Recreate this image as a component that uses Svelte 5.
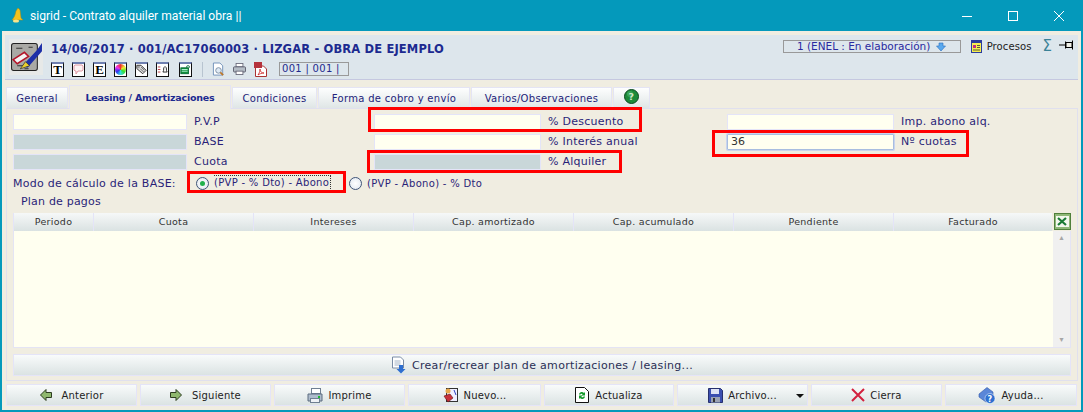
<script>
  const tools = ['T', 'E'];
  const tabs = [
    { label: 'General', w: 62 },
    { label: 'Leasing / Amortizaciones', w: 162, active: true },
    { label: 'Condiciones', w: 85 },
    { label: 'Forma de cobro y envío', w: 152 },
    { label: 'Varios/Observaciones', w: 141 }
  ];
  const cols = [
    { label: 'Periodo', w: 80 },
    { label: 'Cuota', w: 160 },
    { label: 'Intereses', w: 160 },
    { label: 'Cap. amortizado', w: 160 },
    { label: 'Cap. acumulado', w: 160 },
    { label: 'Pendiente', w: 160 },
    { label: 'Facturado', w: 159 }
  ];
</script>

<div class="win">
  <div class="titlebar">
    <svg class="bell" width="12" height="15" viewBox="0 0 12 15">
      <path d="M7 0 L9 2 L10 10 L12 12 L1 12 Q4 9 5 3 Z" fill="#f2c21d" stroke="#a98a14" stroke-width=".5" />
      <ellipse cx="5" cy="13" rx="3" ry="1.500" fill="#f7e48a" />
    </svg>
    <span class="wintitle">sigrid - Contrato alquiler material obra ||</span>
    <div class="winbtns">
      <svg width="12" height="12" viewBox="0 0 12 12"><path d="M1 6.500h10" stroke="#fff" /></svg>
      <svg width="12" height="12" viewBox="0 0 12 12"><rect x="1.500" y="1.500" width="9" height="9" fill="none" stroke="#fff" /></svg>
      <svg width="12" height="12" viewBox="0 0 12 12"><path d="M1 1l10 10M11 1L1 11" stroke="#fff" /></svg>
    </div>
  </div>

  <div class="body">
    <header class="head">
      <div class="logo">
        <svg width="33" height="33" viewBox="0 0 32 32">
          <rect x="1.500" y="2.500" width="25" height="26" rx="2" fill="#a9a9a5" stroke="#222" />
          <path d="M6 7h6M18 6h4M7 24h10M14 27h4" stroke="#333" />
          <path d="M3 18 L14 11 L18 15 L7 22 Z" fill="#f4f4f4" stroke="#b3162a" stroke-width="1.500" />
          <path d="M12 24 L26 9 L31 2 L31 10 L17 26 Z" fill="#1c2fa8" />
          <path d="M10 27 L15 20 L19 24 Z" fill="#e9cf2f" stroke="#222" stroke-width=".6" />
        </svg>
      </div>
      <div class="headmain">
        <div class="doc">14/06/2017 · 001/AC17060003 · LIZGAR - OBRA DE EJEMPLO</div>
        <div class="toolrow">
          <span class="tool"><b>{tools[0]}</b></span>
          <span class="tool">
            <svg width="11" height="11" viewBox="0 0 11 11"><path d="M2 1h7l1 1v4l-1 1H5l-2 3V7H2L1 6V2z" fill="#fdf3f3" stroke="#e09aa5" /></svg>
          </span>
          <span class="tool"><b>{tools[1]}</b></span>
          <span class="tool"><span class="wheel"></span></span>
          <span class="tool">
            <svg width="11" height="11" viewBox="0 0 13 12"><path d="M1 1h5l6 6-4 4-7-6z" fill="#ddd" stroke="#222" /><path d="M5 5l4 4M6 3l4 4" stroke="#222" stroke-width=".7" /><circle cx="3.200" cy="3" r=".9" fill="#fff" stroke="#222" stroke-width=".5" /></svg>
          </span>
          <span class="tool">
            <svg width="11" height="11" viewBox="0 0 13 12"><path d="M1 3h3M1 6h3M1 9h3" stroke="#b3262e" /><path d="M7 9 Q8 8 8 4 Q9.500 1 11 4 Q11 8 12 9 Z" fill="#fff" stroke="#111" /></svg>
          </span>
          <span class="tool g">
            <svg width="11" height="11" viewBox="0 0 13 12"><rect x="1" y="4" width="9" height="7" fill="#12903a" stroke="#063" /><path d="M2 6h7M2 8h7" stroke="#cfe" /><path d="M8 4V2a2 1.500 0 0 1 3 0v2" fill="none" stroke="#063" /></svg>
          </span>
          <span class="sep"></span>
          <svg width="13" height="15" viewBox="0 0 14 16"><path d="M1.500 1h7l3 3v10h-10z" fill="#fff" stroke="#6e8fb8" /><circle cx="7" cy="9" r="3" fill="#dfeaf5" stroke="#7b8ea3" /><path d="M9 11l3 3" stroke="#b9772c" stroke-width="2" /></svg>
          <svg class="ico2" width="13" height="12" viewBox="0 0 15 14"><rect x="3.500" y=".5" width="8" height="4" fill="#fff" stroke="#667" /><rect x=".5" y="4.500" width="14" height="6" rx="1" fill="#b5bdc6" stroke="#556" /><rect x="3.500" y="9.500" width="8" height="4" fill="#fff" stroke="#667" /></svg>
          <svg width="14" height="15" viewBox="0 0 14 15"><path d="M1.500 4h8l3 3v7.500h-11z" fill="#fff" stroke="#a33" /><rect x="0" y="0" width="8" height="6" fill="#b5323c" /><path d="M4 13c2-3 2-5 2-6 0 3 2 4 4 4-2 0-5 1-6 2z" fill="none" stroke="#c22" stroke-width=".8" /></svg>
          <span class="counter">001 | 001 |</span>
        </div>
      </div>
      <div class="headright">
        <span class="state">1 (ENEL : En elaboración)
          <svg width="10" height="10" viewBox="0 0 10 10"><path d="M3 1h4v3h2.500L5 9 .5 4H3z" fill="#5aa9ee" stroke="#2a6fc0" stroke-width=".6" /></svg>
        </span>
        <svg class="proc" width="11" height="13" viewBox="0 0 11 13"><rect x=".5" y=".5" width="10" height="12" fill="#f6ee52" stroke="#2b3d9c" /><rect x="1" y="1" width="9" height="2" fill="#2b3d9c" /><rect x="2" y="5" width="3" height="3" fill="#c22f80" /><path d="M6 5.500h3M6 7.500h3M2 10h7" stroke="#333" stroke-width=".8" /></svg>
        <span class="proclabel">Procesos</span>
        <span class="sigma">Σ</span>
        <svg class="pin" width="16" height="10" viewBox="0 0 16 10"><path d="M0 5h6" stroke="#000" /><path d="M6.500 1.500v7M13.500 .5v9M7 2.500h6v5H7z" stroke="#000" fill="#f0f0e8" /></svg>
      </div>
    </header>

    <nav class="tabs">
      {#each tabs as t}
        <div class="tab" class:active={t.active} style="width: {t.w}px">{t.label}</div>
      {/each}
      <div class="tab help">
        <svg width="15" height="15" viewBox="0 0 15 15"><circle cx="7.500" cy="7.500" r="7" fill="#1d8a3a" stroke="#0c4a1f" /><circle cx="6" cy="5" r="3" fill="#4eb669" opacity=".6" /><text x="7.500" y="11" text-anchor="middle" font-size="9.500" font-weight="700" fill="#cfe8c8" font-family="DejaVu Sans, sans-serif">?</text></svg>
      </div>
    </nav>

    <section class="panel">
      <div class="fields">
        <div class="in"></div><label>P.V.P</label>
        <div class="in"></div><label>% Descuento</label>
        <div class="in"></div><label>Imp. abono alq.</label>

        <div class="in ro"></div><label>BASE</label>
        <div class="in"></div><label>% Interés anual</label>
        <div class="in focus">36</div><label>Nº cuotas</label>

        <div class="in ro"></div><label>Cuota</label>
        <div class="in ro"></div><label>% Alquiler</label>
        <div></div><div></div>
      </div>

      <div class="mode">
        <span class="modelabel">Modo de cálculo de la BASE:</span>
        <span class="radio on"></span>
        <span class="opt dotted">(PVP - % Dto) - Abono</span>
        <span class="radio"></span>
        <span class="opt">(PVP - Abono) - % Dto</span>
      </div>

      <div class="plan">Plan de pagos</div>

      <div class="grid-head">
        {#each cols as c}
          <div class="th" style="width: {c.w}px">{c.label}</div>
        {/each}
        <svg class="xls" width="17" height="17" viewBox="0 0 17 17"><rect x=".5" y=".5" width="16" height="16" fill="#8fb878" stroke="#4f7f3a" /><rect x="2" y="3" width="13" height="11" fill="#f4f8ee" /><path d="M4 5l8 7M12 5l-8 7" stroke="#1a7a35" stroke-width="2.200" /></svg>
      </div>

      <div class="grid-body">
        <div class="rows"></div>
        <div class="scroll"><span>▴</span><span>▾</span></div>
      </div>

      <button class="wide">
        <svg width="16" height="18" viewBox="0 0 16 18"><path d="M1.500 1h8l3 3v8h-11z" fill="#fff" stroke="#7a8ca6" /><path d="M3.500 5h6M3.500 7h6M3.500 9h6" stroke="#a5b4c6" /><path d="M8 9h4v4h2.500l-4.500 4.500L5.500 13H8z" fill="#2f6fd0" /></svg>
        Crear/recrear plan de amortizaciones / leasing...
      </button>
    </section>

    <footer class="foot">
      <button>
        <svg width="12" height="12" viewBox="0 0 12 12"><path d="M.5 6L6 .5V3.500h5.500v5H6v3z" fill="#8fb86e" stroke="#2d3d20" /></svg>
        <span class="gap">Anterior</span>
      </button>
      <button>
        <svg width="12" height="12" viewBox="0 0 12 12"><path d="M11.500 6L6 .5V3.500H.5v5H6v3z" fill="#8fb86e" stroke="#2d3d20" /></svg>
        <span class="gap">Siguiente</span>
      </button>
      <button>
        <svg width="16" height="15" viewBox="0 0 16 15"><rect x="4.500" y=".5" width="9" height="5" fill="#fff" stroke="#6f7f92" /><path d="M1 6h14v7H1z" fill="#aebccc" stroke="#5d6d80" /><rect x="3.500" y="10.500" width="9" height="4" fill="#eef2f6" stroke="#6f7f92" /><rect x="11" y="8" width="2" height="2" fill="#1fbb2f" /></svg>
        Imprime
      </button>
      <button>
        <svg width="15" height="16" viewBox="0 0 15 16"><rect x="3.500" y="1.500" width="11" height="13" fill="#eef" stroke="#333" /><path d="M1 9l6-2 3 4-5 4z" fill="#c8303a" stroke="#611" stroke-width=".6" /><circle cx="5" cy="4" r="2.500" fill="#e8a84a" /><path d="M11 3l2 5" stroke="#2a3fc0" /></svg>
        <span class="gap-s">Nuevo...</span>
      </button>
      <button>
        <svg width="14" height="16" viewBox="0 0 14 16"><path d="M.5.5h9l4 4v11H.5z" fill="#fff" stroke="#111" /><path d="M4 7a3 3 0 0 1 5-1l1-1v3.500H6.500l1.200-1.200A1.800 1.800 0 0 0 5 8zM10 10a3 3 0 0 1-5 1l-1 1V8.500h3.500l-1.200 1.200a1.800 1.800 0 0 0 2.700-.7z" fill="#169a2c" /></svg>
        <span class="gap-s">Actualiza</span>
      </button>
      <button class="menu">
        <svg width="15" height="15" viewBox="0 0 15 15"><path d="M.5.5h12l2 2v12H.5z" fill="#3b4fb0" stroke="#27306e" /><rect x="3" y="1" width="8" height="5" fill="#dfe4f5" /><rect x="3" y="9" width="9" height="5.500" fill="#9aa3b5" /><rect x="5" y="10" width="2" height="4" fill="#333" /></svg>
        Archivo...
        <span class="caret"></span>
      </button>
      <button>
        <svg width="14" height="14" viewBox="0 0 14 14"><path d="M1 1l12 12M13 1L1 13" stroke="#d3213f" stroke-width="2" /></svg>
        Cierra
      </button>
      <button>
        <svg width="18" height="17" viewBox="0 0 18 17"><path d="M1 7L9 .5l6 4.500v5l-7 5-7-5z" fill="#5a86d8" stroke="#3357a8" stroke-width=".6" /><circle cx="12" cy="11.500" r="5" fill="#2e6fd0" stroke="#fff" stroke-width=".5" /><text x="12" y="14.500" text-anchor="middle" font-size="8" font-weight="700" fill="#fff" font-family="DejaVu Sans, sans-serif">?</text></svg>
        Ayuda...
      </button>
    </footer>
  </div>

  <!-- red annotation boxes drawn over the screenshot -->
  <div class="mark" style="left: 368px; top: 107px; width: 268px; height: 19px"></div>
  <div class="mark" style="left: 367px; top: 150px; width: 249px; height: 17px"></div>
  <div class="mark" style="left: 712px; top: 130px; width: 251px; height: 21px"></div>
  <div class="mark" style="left: 187px; top: 171px; width: 153px; height: 16px"></div>
</div>

<style>
  :global(body) {
    margin: 0;
    background: #0499bb;
  }

  .win {
    position: relative;
    width: 1083px;
    height: 412px;
    overflow: hidden;
    box-sizing: border-box;
    background: #0499bb;
    font-family: "DejaVu Sans", Verdana, sans-serif;
    font-size: 11px;
    color: #2a1f78;
  }

  .titlebar {
    height: 31px;
    display: flex;
    align-items: center;
    color: #fff;
    padding-left: 11px;
  }

  .bell {
    margin-right: 7px;
  }

  .wintitle {
    font-family: Roboto, "Open Sans", sans-serif;
    font-size: 12.100px;
  }

  .winbtns {
    margin-left: auto;
    display: flex;
    gap: 34px;
    margin-right: 18px;
  }

  .body {
    margin: 0 2px;
    height: 379px;
    background: #f0ede1;
    padding: 4px 3px 0 3px;
    box-sizing: border-box;
  }

  .head {
    height: 45px;
    display: flex;
    background: #dde6ec;
    border-bottom: 1px solid #c5c8e0;
    box-sizing: border-box;
  }

  .logo {
    width: 34px;
    height: 36px;
    margin: 4px 0 0 4px;
    background: #e7e9e8;
    display: flex;
    align-items: center;
    justify-content: center;
  }

  .headmain {
    margin-left: 8px;
    padding-top: 7px;
  }

  .doc {
    font-weight: 700;
    font-size: 11.500px;
    color: #1c2a90;
    letter-spacing: .15px;
    line-height: 14px;
  }

  .toolrow {
    display: flex;
    align-items: center;
    margin-top: 5px;
    height: 16px;
  }

  .tool {
    width: 11px;
    height: 12px;
    border: 1px solid #111;
    border-top: 2px solid #6e7fb0;
    background: #fff;
    margin-right: 8px;
    display: flex;
    align-items: center;
    justify-content: center;
    font-family: "Liberation Serif", serif;
    font-size: 13px;
    color: #000;
    line-height: 1;
    overflow: hidden;
  }

  .wheel {
    width: 11px;
    height: 11px;
    border-radius: 50%;
    background: conic-gradient(#e33, #ee3, #3d3, #3dd, #33e, #e3e, #e33);
  }

  .tool.g {
    margin-left: 2px;
  }

  .sep {
    width: 1px;
    height: 15px;
    background: #b8c4d0;
    margin: 0 9px 0 2px;
  }

  .ico2 {
    margin: 0 8px 0 8px;
  }

  .counter {
    margin-left: 11px;
    border: 1px solid #999;
    height: 12px;
    width: 66px;
    line-height: 12px;
    font-size: 10px;
    color: #232a8c;
    padding-left: 2px;
    letter-spacing: .3px;
    box-sizing: content-box;
  }

  .headright {
    margin-left: auto;
    display: flex;
    align-items: flex-start;
    padding-top: 5px;
    padding-right: 3px;
  }

  .state {
    width: 176px;
    height: 11px;
    border: 1px solid #999;
    line-height: 11px;
    font-size: 10.500px;
    display: flex;
    align-items: center;
    justify-content: center;
    gap: 6px;
    color: #2a2aa0;
    white-space: nowrap;
  }

  .proc {
    margin: 0 5px 0 10px;
  }

  .proclabel {
    color: #222;
    font-size: 10px;
    margin-top: 1px;
    letter-spacing: .1px;
  }

  .sigma {
    margin-left: 11px;
    color: #3a8297;
    font-size: 15px;
    line-height: 12px;
  }

  .pin {
    margin: 0 0 0 7px;
  }

  .tabs {
    display: flex;
    margin: 6px 0 0 0;
    height: 22px;
    gap: 1px;
    align-items: flex-end;
  }

  .tab {
    height: 21px;
    box-sizing: border-box;
    border: 1px solid #e4e4f4;
    border-bottom: 0;
    background: linear-gradient(#fdfefe, #dfe6e6);
    text-align: center;
    font-size: 10px;
    line-height: 21px;
    color: #23237a;
    letter-spacing: .3px;
  }

  .tab:first-child {
    margin-left: 1px;
  }

  .tab.active {
    height: 24px;
    background: #f0ede1;
    font-weight: 700;
    font-size: 9.500px;
    line-height: 23px;
    color: #1c2a90;
    position: relative;
    letter-spacing: -.2px;
    z-index: 1;
    margin-bottom: -1px;
  }

  .tab.help {
    width: 37px;
    padding-top: 1px;
    line-height: 0;
  }

  .panel {
    height: 273px;
    box-sizing: border-box;
    border: 1px solid #e0e0ee;
    margin-left: 1px;
    padding: 5px 6px 0 6px;
  }

  .fields {
    display: grid;
    grid-template-columns: 174px 187px 167px 186px 167px 1fr;
    grid-auto-rows: 16px;
    row-gap: 4px;
  }

  .fields label {
    padding-left: 7px;
    line-height: 16px;
    white-space: nowrap;
    letter-spacing: .25px;
  }

  .in {
    box-sizing: border-box;
    background: #fffff0;
    border: 1px solid #e4e4f8;
    font-size: 11px;
    line-height: 14px;
    padding-left: 3px;
    color: #333;
  }

  .in.ro {
    background: #c9d7d9;
  }

  .in.focus {
    border-color: #a8bde0;
    border-radius: 1px;
    box-shadow: 0 0 0 1px #c8d4ee;
  }

  .mode {
    display: flex;
    align-items: center;
    height: 18px;
    margin-top: 4px;
  }

  .modelabel {
    width: 183px;
    white-space: nowrap;
    letter-spacing: .25px;
  }

  .radio {
    width: 11px;
    height: 11px;
    border: 1px solid #3f5478;
    border-radius: 50%;
    background: radial-gradient(#fff, #dfe6ee);
    margin-right: 5px;
    flex: none;
    position: relative;
  }

  .radio.on::after {
    content: "";
    position: absolute;
    left: 3px;
    top: 3px;
    width: 5px;
    height: 5px;
    border-radius: 50%;
    background: #22b14c;
  }

  .opt {
    font-size: 10px;
    white-space: nowrap;
    letter-spacing: .3px;
  }

  .dotted {
    width: 116px;
    margin-right: 18px;
    border: 1px dotted #333;
    border-width: 1px 1px 1px 0;
    line-height: 14px;
    overflow: hidden;
  }

  .plan {
    margin: 2px 0 0 8px;
    height: 16px;
    line-height: 16px;
    letter-spacing: .2px;
  }

  .grid-head {
    display: flex;
    align-items: center;
    margin-top: 2px;
    height: 19px;
    gap: 1px;
    width: 1058px;
  }

  .th {
    box-sizing: border-box;
    height: 18px;
    margin-right: -1px;
    border-left: 1px solid #e4e4f8;
    background: linear-gradient(#f6f8f8, #dae2e2);
    text-align: center;
    font-size: 9.500px;
    line-height: 18px;
    color: #333;
    letter-spacing: .3px;
  }

  .xls {
    margin-left: 2px;
  }

  .grid-body {
    display: flex;
    height: 117px;
    width: 1058px;
    box-sizing: border-box;
    border: 1px solid #e4e4f4;
    border-top: 0;
    background: #fffff0;
  }

  .rows {
    flex: 1;
  }

  .scroll {
    width: 17px;
    background: #f0f0f0;
    display: flex;
    flex-direction: column;
    justify-content: space-between;
    align-items: center;
    color: #a6a6a6;
    font-size: 8px;
    line-height: 14px;
  }

  button {
    font-family: inherit;
    font-size: 10px;
    color: #222;
    border: 1px solid #e4e4f8;
    background: linear-gradient(#f9fbfb, #dbe3e3);
    padding: 0;
    display: flex;
    align-items: center;
    justify-content: center;
    box-sizing: border-box;
    letter-spacing: .2px;
  }

  .wide {
    width: 1058px;
    height: 22px;
    margin-top: 6px;
    gap: 5px;
    font-size: 11px;
    color: #2a2f55;
    letter-spacing: .32px;
  }

  .foot {
    display: grid;
    grid-template-columns: 131px 131px 131px 133px 130px 131px 131px 132px;
    column-gap: 3px;
    margin: 3px 0 0 1px;
    height: 22px;
  }

  .foot button {
    gap: 5px;
    height: 22px;
  }

  .foot .gap {
    margin-left: 5px;
  }

  .foot .gap-s {
    margin-left: 1px;
  }

  .menu {
    position: relative;
  }

  .caret {
    position: absolute;
    right: 3px;
    top: 9px;
    border: 4px solid transparent;
    border-top: 4px solid #111;
    border-bottom: 0;
  }

  .mark {
    position: absolute;
    border: 3px solid #f00;
    z-index: 2;
  }
</style>
